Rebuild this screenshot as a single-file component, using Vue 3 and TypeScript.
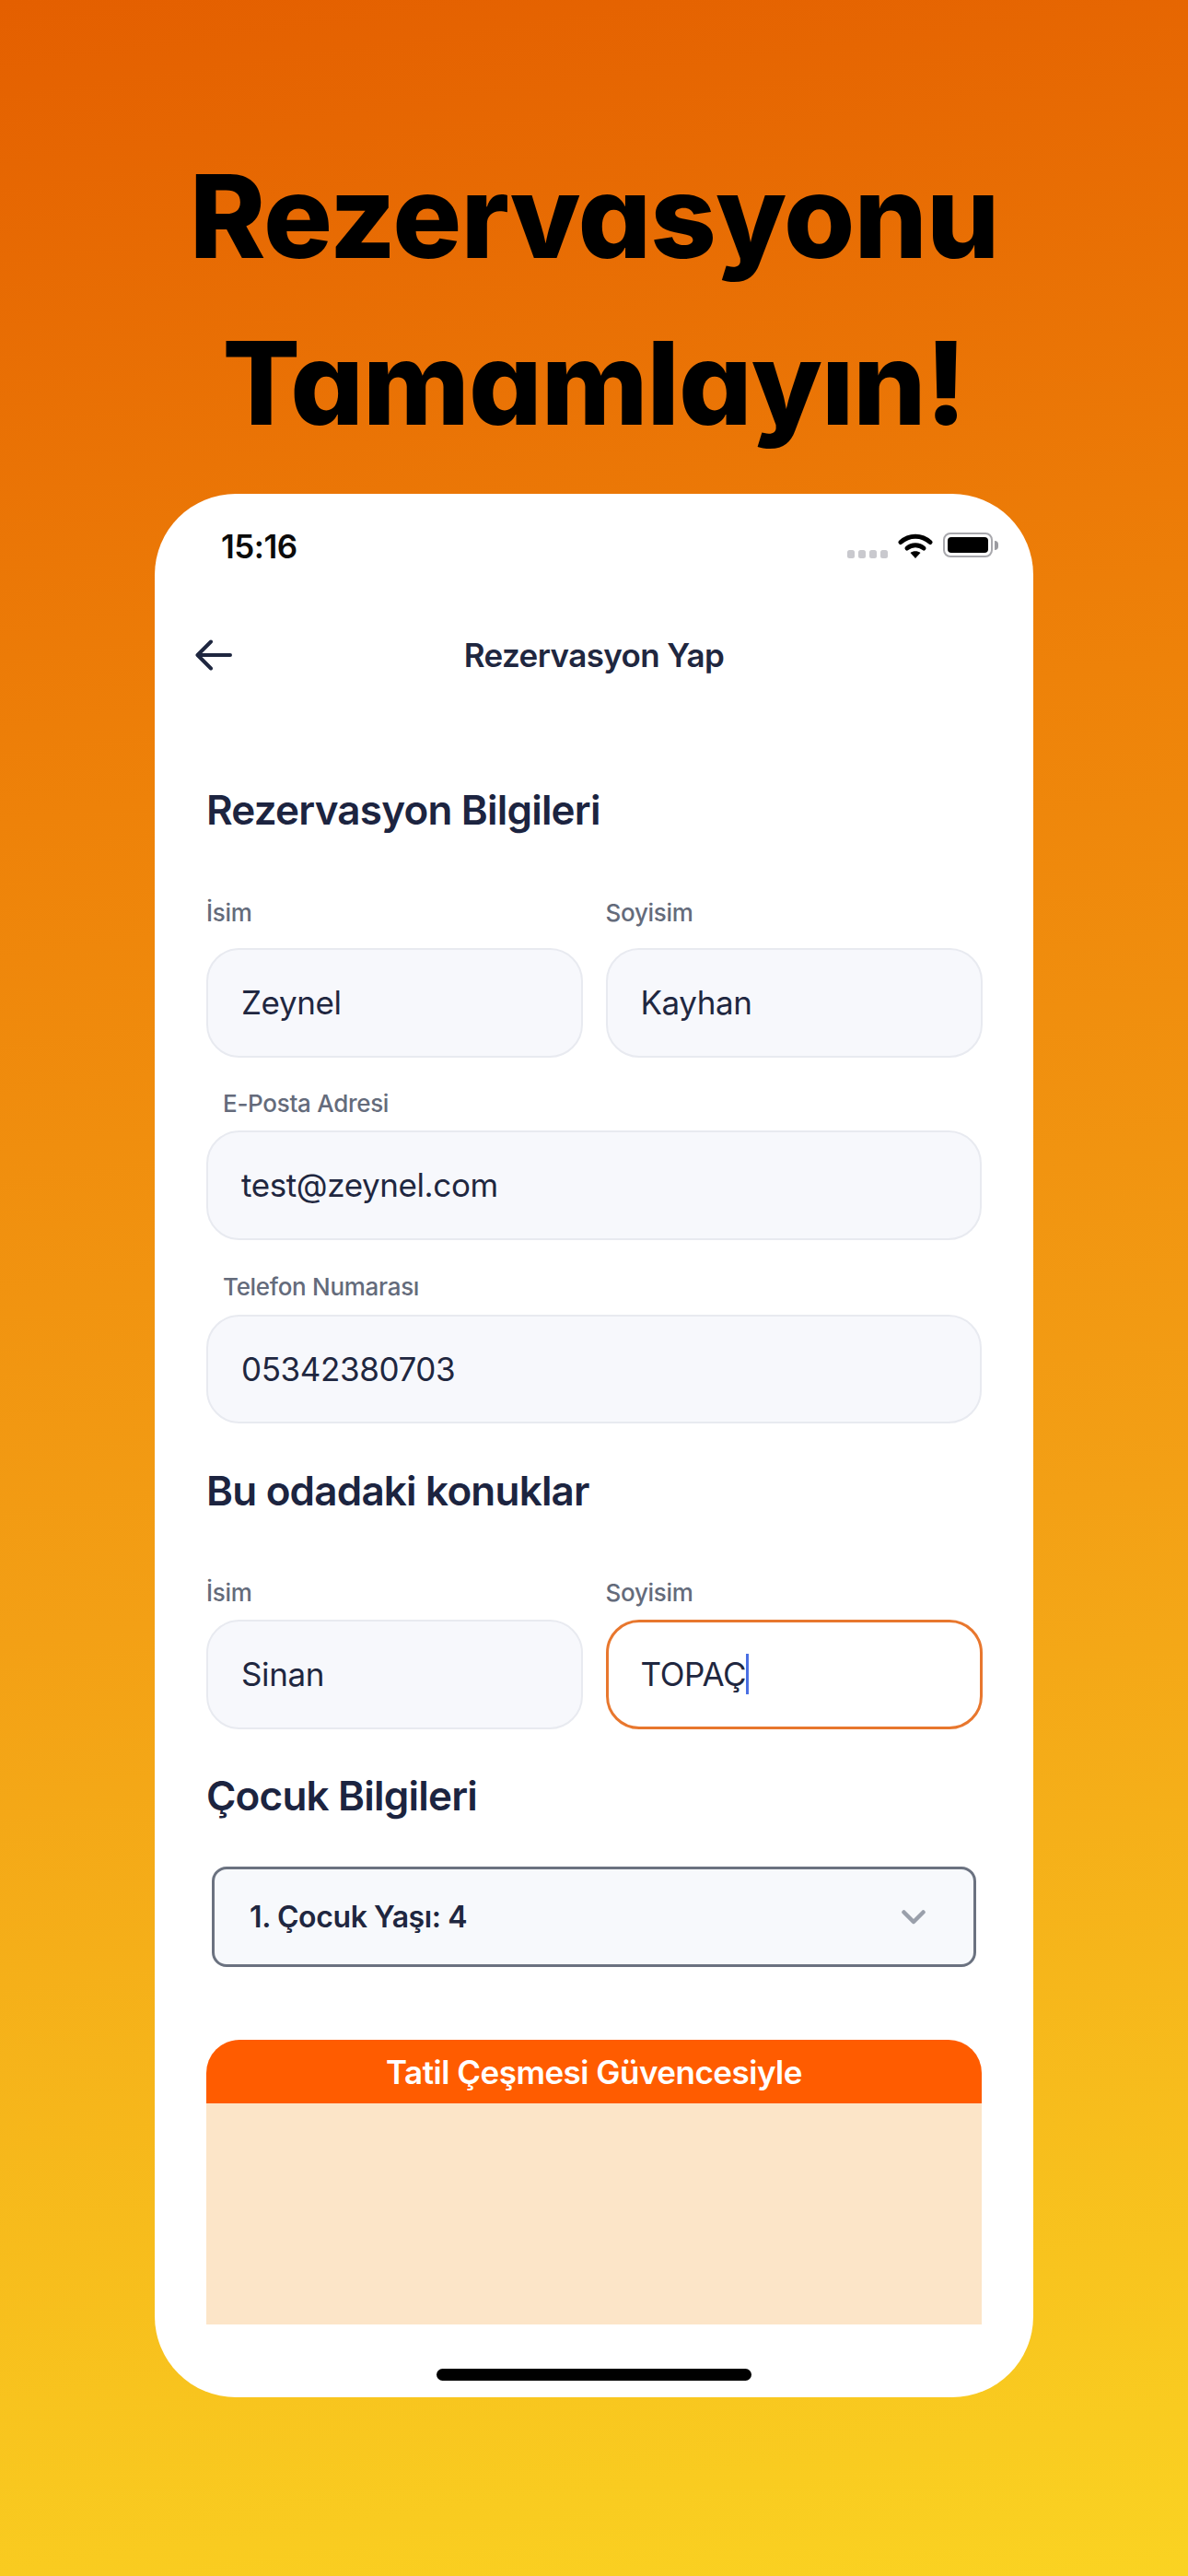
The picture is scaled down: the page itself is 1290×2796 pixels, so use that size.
<script setup lang="ts">
interface Field {
  label: string
  value: string
}
const nameRow: Field[] = [
  { label: 'İsim', value: 'Zeynel' },
  { label: 'Soyisim', value: 'Kayhan' },
]
</script>

<template>
  <main class="page">
    <h1 class="headline">Rezervasyonu<br />Tamamlayın!</h1>
    <section class="phone">
      <header class="status">
        <span class="clock">15:16</span>
        <div class="status-icons">
          <div class="signal"><i></i><i></i><i></i><i></i></div>
          <svg class="wifi" viewBox="0 0 38 28" width="38" height="28" aria-hidden="true">
            <path d="M3 10.5C12 2 26 2 35 10.5" fill="none" stroke="#000" stroke-width="5" stroke-linecap="round" />
            <path d="M10 17C15 12.5 23 12.5 28 17" fill="none" stroke="#000" stroke-width="5" stroke-linecap="round" />
            <path d="M13.5 22C16.5 19.5 21.5 19.5 24.5 22L19 28Z" fill="#000" />
          </svg>
          <div class="battery"><span class="battery-fill"></span></div>
          <span class="battery-tip"></span>
        </div>
      </header>

      <nav class="nav">
        <svg class="back" viewBox="0 0 40 34" width="40" height="34" aria-hidden="true">
          <path d="M38 17H3M17 2.500L2.500 17L17 31.500" fill="none" stroke="#1f2740" stroke-width="4" stroke-linecap="round" stroke-linejoin="round" />
        </svg>
        <span class="nav-title">Rezervasyon Yap</span>
      </nav>

      <div class="content">
        <h2 class="heading heading-first">Rezervasyon Bilgileri</h2>
        <div class="row row-first">
          <div v-for="f in nameRow" :key="f.label">
            <div class="label label-row">{{ f.label }}</div>
            <div class="field">{{ f.value }}</div>
          </div>
        </div>
        <div class="label label-wide label-email">E-Posta Adresi</div>
        <div class="field">test@zeynel.com</div>
        <div class="label label-wide label-phone">Telefon Numarası</div>
        <div class="field">05342380703</div>

        <h2 class="heading heading-guests">Bu odadaki konuklar</h2>
        <div class="row row-guests">
          <div>
            <div class="label">İsim</div>
            <div class="field">Sinan</div>
          </div>
          <div>
            <div class="label">Soyisim</div>
            <div class="field field-focus"><span>TOPAÇ</span><i class="caret"></i></div>
          </div>
        </div>

        <h2 class="heading heading-child">Çocuk Bilgileri</h2>
        <div class="select">
          <span>1. Çocuk Yaşı: 4</span>
          <svg viewBox="0 0 26 16" width="26" height="16" aria-hidden="true">
            <path d="M2.500 2.500L13 13L23.500 2.500" fill="none" stroke="#9aa0ab" stroke-width="4.500" stroke-linecap="round" stroke-linejoin="round" />
          </svg>
        </div>

        <div class="card">
          <div class="card-head">Tatil Çeşmesi Güvencesiyle</div>
          <div class="card-body"></div>
        </div>
      </div>

      <div class="home"></div>
    </section>
  </main>
</template>

<style>
html,
body {
  margin: 0;
  background: #fff;
}
</style>

<style scoped>
.page {
  box-sizing: border-box;
  width: 1290px;
  height: 2796px;
  margin-top: 0;
  padding-top: 2px;
  display: flex;
  flex-direction: column;
  align-items: center;
  overflow: hidden;
  background: linear-gradient(172deg, #e45f00 0%, #ee8209 30%, #f3a015 60%, #fad322 100%);
  font-family: Inter, "Noto Sans", sans-serif;
}
.headline {
  margin: 142px 0 0;
  font-family: Inter, sans-serif;
  font-feature-settings: "cv11" 1;
  font-size: 125px;
  line-height: 181px;
  font-weight: 800;
  letter-spacing: -1px;
  color: #000;
  text-align: center;
  white-space: nowrap;
}
.phone {
  width: 954px;
  height: 2066px;
  margin-top: 30px;
  border-radius: 88px;
  background: #fff;
  display: flex;
  flex-direction: column;
  flex-shrink: 0;
  color: #1f2740;
}
.status {
  height: 110px;
  padding: 0 38px 0 72px;
  display: flex;
  justify-content: space-between;
  align-items: flex-start;
}
.clock {
  margin-top: 36px;
  font-size: 35px;
  line-height: 42px;
  font-weight: 600;
  letter-spacing: -0.5px;
  color: #0b0b0b;
}
.status-icons {
  margin-top: 42px;
  display: flex;
  align-items: flex-start;
}
.signal {
  display: flex;
  gap: 3.500px;
  margin: 19px 11px 0 0;
}
.signal i {
  width: 8.500px;
  height: 8.500px;
  border-radius: 2.500px;
  background: #c9c9ce;
}
.wifi {
  margin-right: 11px;
}
.battery {
  box-sizing: border-box;
  width: 54px;
  height: 27px;
  padding: 3px;
  border: 2.500px solid #a8a8ad;
  border-radius: 8px;
  display: flex;
}
.battery-fill {
  flex: 1;
  background: #000;
  border-radius: 4px;
}
.battery-tip {
  width: 4px;
  height: 10px;
  margin: 8.500px 0 0 2px;
  border-radius: 0 4px 4px 0;
  background: #9b9ba0;
}
.nav {
  height: 130px;
  padding: 0 44px;
  display: grid;
  grid-template-columns: 40px 1fr 40px;
  align-items: center;
}
.back {
  display: block;
}
.nav-title {
  font-size: 35px;
  line-height: 44px;
  font-weight: 600;
  letter-spacing: -0.6px;
  text-align: center;
}
.content {
  padding: 0 56px;
}
.heading {
  margin: 0;
  font-size: 44px;
  line-height: 60px;
  font-weight: 600;
  letter-spacing: -0.8px;
  color: #1c2440;
}
.heading-first {
  margin-top: 73px;
}
.heading-guests {
  margin-top: 43px;
}
.heading-child {
  margin-top: 42.500px;
}
.row {
  display: grid;
  grid-template-columns: 408.500px 409.500px;
  column-gap: 25px;
}
.row-first {
  margin-top: 65px;
}
.row-guests {
  margin-top: 63.500px;
}
.label {
  margin-bottom: 12.500px;
  font-size: 26px;
  line-height: 34px;
  font-weight: 500;
  letter-spacing: -0.3px;
  color: #646b7b;
}
.label-row {
  margin-bottom: 21px;
}
.label-wide {
  padding-left: 18px;
}
.label-email {
  margin-top: 33px;
}
.label-phone {
  margin-top: 34.500px;
}
.field {
  box-sizing: border-box;
  height: 118.500px;
  padding: 0 36px;
  display: flex;
  align-items: center;
  border: 2px solid #e8eaf0;
  border-radius: 36px;
  background: #f7f8fc;
  font-size: 35px;
  font-weight: 400;
  letter-spacing: -0.4px;
  color: #1f2740;
}
.field-focus {
  border: 3px solid #e8772e;
  background: #fff;
  padding: 0 35px;
}
.caret {
  width: 3px;
  height: 44px;
  background: #4a6fe3;
  flex-shrink: 0;
}
.select {
  box-sizing: border-box;
  width: 830px;
  height: 109px;
  margin: 47px 0 0 6px;
  padding: 0 52px 0 38px;
  display: flex;
  align-items: center;
  justify-content: space-between;
  border: 3px solid #6b7280;
  border-radius: 16px;
  background: #f7f9fc;
  font-size: 32px;
  font-weight: 600;
  letter-spacing: -0.4px;
  color: #1f2740;
}
.card {
  margin-top: 79px;
}
.card-head {
  height: 69px;
  border-radius: 36px 36px 0 0;
  background: #ff5c00;
  display: flex;
  align-items: center;
  justify-content: center;
  font-size: 35px;
  font-weight: 600;
  letter-spacing: -0.5px;
  color: #fff;
}
.card-body {
  height: 240px;
  background: #fce5c8;
}
.home {
  width: 342px;
  height: 13px;
  margin: 48px auto 0;
  border-radius: 7px;
  background: #000;
}
</style>
